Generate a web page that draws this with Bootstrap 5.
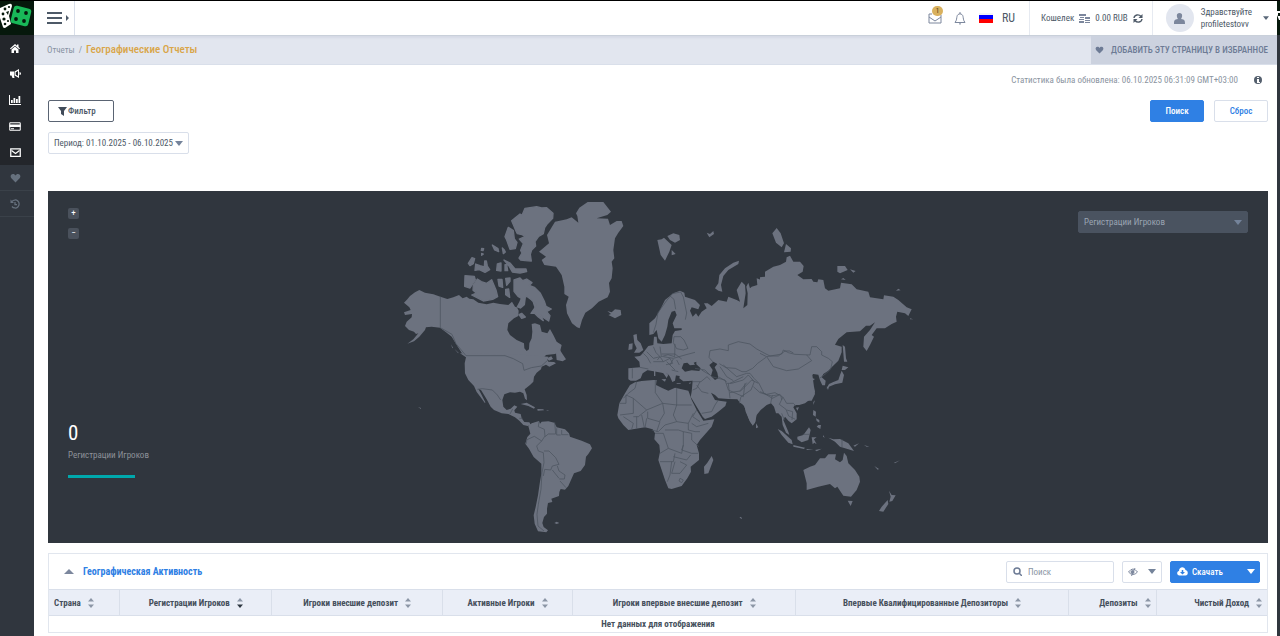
<!DOCTYPE html>
<html lang="ru">
<head>
<meta charset="utf-8">
<meta name="viewport" content="width=device-width, initial-scale=1">
<title>Географические Отчеты</title>
<link href="https://cdn.jsdelivr.net/npm/bootstrap@5.3.0/dist/css/bootstrap.min.css" rel="stylesheet">
<style>
:root{--dark:#30363e;--darker:#23262b;--blue:#2f80e4;--slate:#5a6879;--line:#d9dfea}
body{font-family:"Liberation Sans Narrow","Roboto Condensed","Liberation Sans",sans-serif;font-size:9px;line-height:12px;color:#4d5967;border-top:1px solid #000;background:#fff}
button,input,select{font-family:inherit}
a{text-decoration:none;color:inherit}
svg{display:block;flex:none}
.side{width:34px;background:var(--dark)}
.logo{height:34px;background:#06180c}
.side-link{height:26px;color:#fff}
.side-main{background:var(--darker)}
.side-extra .side-link{color:#66717e;border-bottom:1px solid #3a4149}
.edge{width:3px;background:var(--dark)}
.topbar{height:34px}
.toggle-box{width:41px;padding-left:13px;border-right:1px solid var(--line)}
.plain-btn{border:0;background:none;padding:0;color:inherit}
.tools{gap:12px}
.tools-end{padding:0 14px 0 13px}
.mail-count{left:4px;top:-6px;width:11px;height:10px;border-radius:5px;background:#d9b15e;color:#4a3a1a;font-size:7px;line-height:10px}
.lang{font-size:12px;gap:9px}
.sep{border-left:1px solid #e6eaf1}
.wallet{padding:0 9px 0 11px;gap:5px}
.profile{padding-left:13px;padding-right:8px;gap:7px}
.avatar{width:28px;height:28px;background:#e2e6ef;color:#7c879d}
.crumbs{height:30px;background:#e2e6ef;border-top:1px solid #c9d0da;border-bottom:1px solid var(--line);box-shadow:inset 0 2px 2px #d5dae5;color:#8993a3}
.crumbs nav{padding-left:13px}
.crumbs h1{font-size:11px;line-height:14px;color:#d9a548;font-weight:500}
.fav{background:#ccd2df;color:#6d7b95;width:186px;font-weight:500;padding-right:9px;gap:7px}
.main-area{padding:0 9px 0 14px}
.note{height:30px;color:#8a93a0;padding-right:6px}
.act-row{padding-top:5px;gap:10px}
.ctl{height:22px;border-radius:2px;font-size:9px;line-height:12px;padding:0;border:1px solid var(--line);background:#fff;color:#4d5967}
.filter-btn{width:66px;border-color:#5a6473;padding-left:9px;gap:1px;font-weight:500}
.act-btn{width:54px;font-weight:500;color:var(--blue)}
.act-blue{background:var(--blue);border-color:var(--blue);color:#fff}
.pick{appearance:none;padding:0 5px;background:#fff url("data:image/svg+xml,%3Csvg xmlns='http://www.w3.org/2000/svg' viewBox='0 0 8 5'%3E%3Cpath d='M0 0h8L4 5z' fill='%2374839a'/%3E%3C/svg%3E") no-repeat right 5px center/8px 5px}
.pick-period{width:141px;margin-top:10px}
.map-panel{background:var(--dark);height:352px;margin-top:37px}
.map-panel>svg{width:100%;height:351px}
.zoom-btn{width:11px;height:11px;border:0;border-radius:2px;background:#4a515c;color:#fff;font-size:9px;line-height:9px;padding:0}
.map-tools{left:20px;top:17px;gap:9px}
.map-select{right:20px;top:20px;width:170px;border-color:#4a5360;color:#9aa5b3;background-color:#4a5360}
.map-stat{left:20px;bottom:65px;color:#8d9299}
.map-stat strong{font-size:21px;line-height:24px;color:#fff;font-weight:400}
.stat-bar{height:3px;width:67px;background:#00a8ac;margin-top:14px}
.panel{border:1px solid #e1e6ee;margin-top:10px}
.panel-top{height:35px;padding-right:7px;padding-left:15px}
.panel-tools{gap:8px}
.panel-top h2{font-size:10px;line-height:14px;color:var(--blue);font-weight:700;margin-left:9px}
.search{width:108px;padding:0 6px;gap:6px}
.search input{border:0;outline:0;width:70px;padding:0;color:#8a94a4;background:none}
.search input::placeholder{color:#8a94a4;opacity:1}
.cols-btn{width:40px;padding:0 5px}
.load-btn{width:90px;padding:0 4px 0 6px;gap:4px;font-weight:500}
.geo{table-layout:fixed;line-height:12px;color:#454f5b;width:100%}
.geo th{background:#eaeef7;border:solid var(--line);border-width:1px 1px 1px 0;height:26px;text-align:right;padding:0 5px;white-space:nowrap;font-weight:700}
.geo th.mid{text-align:center}
.geo td{height:16px;padding:0;text-align:center;font-weight:700}
.geo th svg{display:inline-block;margin-left:7px;vertical-align:middle}
</style>
</head>
<body class="d-flex min-vh-100">
<svg width="0" height="0" class="position-absolute" aria-hidden="true">
<symbol id="sort" viewBox="0 0 6 10"><path d="M0 3.500 3 0l3 3.500z"/><path d="M0 6.500h6L3 10z"/></symbol>
<symbol id="sortd" viewBox="0 0 6 10"><path d="M0 3.500 3 0l3 3.500z"/><path d="M0 6.500h6L3 10z" fill="#2d3640"/></symbol>
<symbol id="heart" viewBox="0 0 16 16"><path d="M8 15 1.400 8.300C-1 5.600.3 1.500 4 1.500c2 0 3.200 1.100 4 2.300.8-1.200 2-2.300 4-2.300 3.700 0 5 4.100 2.600 6.800z"/></symbol>
<symbol id="down" viewBox="0 0 8 5"><path d="M0 0h8L4 5z"/></symbol>
</svg>
<nav class="side flex-shrink-0" aria-label="Меню">
<a href="#" class="logo d-block" aria-label="Главная"><svg width="34" height="34" viewBox="0 0 34 34"><path d="M0 7 9 3q3-1 3 2L9 15l2 8-6 4q-2 0-2-1L0 17z" fill="#fff"/><g fill="#06180c"><circle cx="5" cy="8" r="1.400"/><circle cx="9" cy="6" r="1.100"/><circle cx="3" cy="13" r="1.400"/><circle cx="4" cy="18" r="1.600"/><circle cx="5" cy="23" r="1.300"/><circle cx="8" cy="20" r="1.100"/><path d="M6 11l3-1-1 4z"/></g><rect x="12" y="6" width="18" height="18" rx="3" fill="#18b858" transform="rotate(14 21 15)"/><g fill="#06180c"><circle cx="18" cy="10" r="1.900"/><circle cx="26" cy="12" r="1.900"/><circle cx="16" cy="18" r="1.900"/><circle cx="24" cy="20" r="1.900"/></g></svg></a>
<div class="side-main">
<a href="#" class="side-link d-flex align-items-center justify-content-center pe-1" aria-label="Домой"><svg width="10" height="9" viewBox="0 0 20 18" fill="currentColor"><path d="m10 0 4 3.500V1h3v5l3 3-1.500 1.500L10 3.500 1.500 10.500 0 9z"/><path d="m10 5 7 6v7h-5v-5H8v5H3v-7z"/></svg></a>
<a href="#" class="side-link d-flex align-items-center justify-content-center pe-1" aria-label="Маркетинг"><svg width="11" height="10" viewBox="0 0 22 20" fill="currentColor"><path d="M0 5h8v8H8l1 5H5L3 13H0zM9 5l9-5v18l-9-5zm2.500 1.700v4.600L16 14V4zM19 6q3 0 3 3t-3 3z" fill-rule="evenodd"/></svg></a>
<a href="#" class="side-link d-flex align-items-center justify-content-center pe-1" aria-label="Отчеты"><svg width="12" height="10" viewBox="0 0 24 20" fill="currentColor"><path d="M0 0h2v18h22v2H0z"/><path d="M4 10h3.500v6H4zM9 6h3.500v10H9zM14 8h3.500v8H14zM19 2h3.500v14H19z"/></svg></a>
<a href="#" class="side-link d-flex align-items-center justify-content-center pe-1" aria-label="Платежи"><svg width="12" height="9" viewBox="0 0 24 18"><path d="M1.500 1.500h21v15h-21z" fill="none" stroke="currentColor" stroke-width="2"/><path d="M1 5h22v5H1zM4 12.500h6v2H4z" fill="currentColor"/></svg></a>
<a href="#" class="side-link d-flex align-items-center justify-content-center pe-1" aria-label="Сообщения"><svg width="11" height="9" viewBox="0 0 22 18" fill="none" stroke="currentColor" stroke-width="2.500"><path d="M1.500 1.500h19v15h-19z"/><path d="m3 5 8 6 8-6"/></svg></a>
</div>
<div class="side-extra">
<a href="#" class="side-link d-flex align-items-center justify-content-center pe-1" aria-label="Избранное"><svg width="11" height="10" fill="currentColor"><use href="#heart"/></svg></a>
<a href="#" class="side-link d-flex align-items-center justify-content-center pe-1" aria-label="История"><svg width="10" height="10" viewBox="0 0 20 20" fill="none" stroke="currentColor" stroke-width="2.500"><path d="M4 5a8 8 0 1 1 0 10"/><path d="M10 6v5h4"/><path d="M1 1v7h7z" fill="currentColor" stroke="none"/></svg></a>
</div>
</nav>
<div class="flex-grow-1 d-flex flex-column">
<header class="topbar d-flex">
<div class="toggle-box d-flex align-items-center"><button class="plain-btn" aria-label="Развернуть меню"><svg width="22" height="12" viewBox="0 0 22 12" fill="#4d5967"><path d="M0 0h15v2H0zM0 5h15v2H0zM0 10h15v2H0zM19 3l3 3-3 3z"/></svg></button></div>
<div class="ms-auto d-flex align-items-center">
<div class="tools d-flex align-items-center">
<a href="#" class="position-relative" aria-label="Почта"><svg width="14" height="12" viewBox="0 0 14 12" fill="none" stroke="#7c879d"><path d="M4 2H1v9h12V3M1 5l6 4 6-4"/></svg><span class="mail-count position-absolute text-center">1</span></a>
<a href="#" aria-label="Уведомления"><svg width="12" height="13" viewBox="0 0 12 13" fill="none" stroke="#7c879d"><path d="M1 10.500C3 8 2.500 6 3 4.500 3.500 1 8.500 1 9 4.500 9.500 6 9 8 11 10.500zM5 11.500q1 1.500 2 0M6 0v2"/></svg></a>
</div>
<div class="tools-end">
<button class="plain-btn lang d-flex align-items-center"><svg width="14" height="10" viewBox="0 0 14 10"><path fill="#f4f4f6" d="M0 0h14v2H0z"/><path fill="#00f" d="M0 2h14v4H0z"/><path fill="#f00" d="M0 6h14v4H0z"/></svg>RU</button></div>
<div class="sep wallet h-100 d-flex align-items-center"><span>Кошелек</span><svg width="11" height="9" viewBox="0 0 11 9" fill="#7c879d"><path d="M0 0h7v2H0zM1 3h4v1H1zM0 5h5v1H0zM0 7h5v2H0zM6 3h5v2H6zM6 6h5v1H6zM6 8h5v1H6z"/></svg><span>0.00 RUB</span><button class="plain-btn" aria-label="Обновить"><svg width="10" height="9" viewBox="0 0 20 18" fill="none" stroke="#4d5967" stroke-width="2.800"><path d="M2 8C3 1 12 0 16 5M18 10C17 17 8 18 4 13"/><path d="M19 0v8h-8zM1 18v-8h8z" fill="#4d5967" stroke="none"/></svg></button></div>
<div class="sep profile h-100 d-flex align-items-center"><span class="avatar rounded-circle d-flex align-items-center justify-content-center"><svg width="11" height="11" viewBox="0 0 11 11" fill="currentColor"><path d="M5.500 0C9 0 8.500 4 7 6c4 .5 4 2 4 5H0C0 8 0 6.500 4 6 2.500 4 2 0 5.500 0z"/></svg></span><span>Здравствуйте<br>profiletestovv</span><svg class="ms-1" width="6" height="4" fill="#5a6879"><use href="#down"/></svg></div>
</div>
</header>
<div class="crumbs d-flex align-items-stretch flex-shrink-0">
<nav class="d-flex align-items-center gap-1" aria-label="Навигация"><a href="#">Отчеты</a><span>/</span><h1 class="m-0">Географические Отчеты</h1></nav>
<a href="#" class="fav ms-auto d-flex align-items-center justify-content-end text-nowrap"><svg width="9" height="8" fill="currentColor"><use href="#heart"/></svg>ДОБАВИТЬ ЭТУ СТРАНИЦУ В ИЗБРАННОЕ</a>
</div>
<main class="main-area">
<div class="note d-flex align-items-center justify-content-end gap-3"><span>Статистика была обновлена: 06.10.2025 06:31:09 GMT+03:00</span><svg width="8" height="8" viewBox="0 0 8 8"><circle cx="4" cy="4" r="4" fill="#55606e"/><path d="M3 3h2v3h1v1H3V6h0V4H3zM3 1h2v1H3z" fill="#fff"/></svg></div>
<div class="act-row d-flex">
<button class="ctl filter-btn d-flex align-items-center me-auto"><svg width="9" height="9" viewBox="0 0 9 9" fill="#404b59"><path d="M0 0h9L6 4v5L3 7V4z"/></svg>Фильтр</button>
<button class="ctl act-btn act-blue">Поиск</button><button class="ctl act-btn">Сброс</button>
</div>
<select class="ctl pick pick-period d-block" aria-label="Период"><option>Период: 01.10.2025 - 06.10.2025</option></select>
<section class="map-panel position-relative" aria-label="Карта">
<svg viewBox="48 191 1220 351" role="img" aria-label="Карта мира">
<g fill="#6c727f">
<g transform="translate(390 190) scale(.33333)">
<path d="M151 320 130 313 105 308 88 300 75 307 60 318 52 328 42 338 58 352 62 360 42 367 45 375 66 372 65 382 50 395 45 408 57 420 72 425 78 432 85 430 70 448 52 461 72 454 88 440 105 420 108 412 125 410 150 413 170 428 185 440 200 465 215 488 228 500 235 560 400 560 440 540 455 530 452 512 468 495 495 492 510 485 515 465 500 455 490 435 480 417 472 430 455 425 450 405 435 400 425 402 427 425 425 445 418 460 417 478 410 483 403 475 402 460 380 450 360 435 352 420 355 400 372 385 385 378 386 362 380 350 388 335 395 318 408 322 405 345 392 356 375 350 366 335 355 345 330 342 310 338 290 343 265 338 250 328 238 326 230 320 218 325 207 315 190 322 172 327z"/>
<g stroke="#6c727f" stroke-width="4" stroke-linejoin="round">
<path d="m365 92 10-8 15-12 6 4 9-21 15-2 20-3 15 4 15-1 19 17-1 15-16 16-8 12-4 18-14 8-11 16 2 13-12 12-4 13 3 20-18-1-14-2-5-6 9-15-4-8 8-20-12-14 18-8-10-5-14-3-5-10zM355 112l15 10 3 25 8 10-5 19-16 2-10-28-5-10zM307 165l17 11 2 9-12-5zM337 174l6 6 3 6-6 5zM275 175l6 1-2 6-5-1zM275 190l5 2-5 4zM235 220l11-17 8 3-4 15-10 6zM257 222l13 5 13 4 1-18 5 0 3 15 7 11-14 8-17-8-13 2zM322 222l11-3v24l-13-2zM345 224h5l3 18h-8zM342 210l18 9 15 18 33 0 2 8-20 4-23-3-10-18zM225 257l28 2 3 11-16 24-16-5z"/>
<path d="m250 285 12-18 12 8 16 5 15-11 13 31 5 20-15 8-28 5-35-18 14-6-10-8zM324 268h12l2 24-11-4zM347 265l13-1v10l-10 12zM347 298l9-1 3 25-12-8z"/>
<path d="m372 270 18-6 8 8 12-5 16 11-8 8 15 6 18 18 12 24 5 15 16 8-14 8 10 12-4 16-14-9-12-10 10 18-15-11-12-12-10 1 10-14 6-12-15-15-14-10-14 7-12-7-12-15zM387 374l8-4 11 11-11 4zM430 337l7 6-3 6z"/>
</g>
<path d="m498 490 10-14 8 14 12 18-10 6-18-4zM470 505l14-6 5 8-12 5zM183 463l6 10-2 2zM193 476l14 14-4-2z"/>
</g>
<g transform="translate(520 190) scale(.33333)">
<path d="m168 70 10-17 25-17h47l23 29-11 10-32 10 34 1 6 19 20-12h15l5 15-15 20-10 17-5 35 3 25-8 10 3 20-3 30-8 14 3 26-7 17-27 13-20 20-20 13-10 22-7 25-8-3-15-12-15-30-3-25 8-25-13-8v-22l-8-35-17-25-35-5-8-15 13-10-21-15 30-25-6-25 24-40 35-7 15-6 20 16-3-20zM262 363l13 4 10-9 17 2 2 15-19 10-20-10 8-3zM412 150l13-2 7-5 23 22-7 20-13 27-13-17zM442 138l18-8 18 5 2 15-15 8-15-8zM455 180l12 12-12 4zM340 435l10-3 2 18 10 10 8 20-12 8h-16l8-13-7-15zM327 462l11-2-1 18-12 2z"/>
</g>
<g transform="translate(640 220) scale(.33333)">
<path d="M28 345V310L45 295 60 270 75 240 100 220 120 212 133 218 135 230 165 240 180 255 175 268 155 262 150 272 158 290 168 280 175 290 185 275 200 265 192 250 203 250 215 258 235 240 260 245 265 230 290 240 300 245 290 210 305 185 315 195 317 220 310 265 322 255 323 220 319 200 325 188 330 205 335 200 352 195 350 175 370 182 380 160 410 140 440 130 450 108V470H130L20 450 0 440V410L25 378 40 375 42 350 50 350 52 370 70 372 95 370 98 345 105 333 125 330V325L103 325 98 310 110 285 105 272 95 275 85 300 82 320 75 345 65 365 55 355 50 330 40 342z"/>
<path d="m225 205 10-15 3-25 17-20 25-17 17-6-2 10-30 18-15 18-7 27 4 20-12-3zM200 38l10 4 10-9 2 9-14 10z"/>
</g>
<g transform="translate(760 220) scale(.33333)">
<path d="m37 40 13-16 12 16 10 30-7 12-17-14zM72 97l6-25 15 13-1 10zM0 172l15-2v-15l25-15 20-5 18-10 2-13 10-5 10 18h20l11 13-3 17-16 10 18 13 25-1 5 8 12 2 3-9 15 2 5 25 10 7 35-7 3-17 32 5 15 15 35 7 5 17 40 6 2-12 28 4 15 10 25 22 15 6-10 20-10-8-23-5-4 15 2 15-15 7-20 13h-25l-15 20 7 5-12 25-10 18-10-13 2-30 18-20 15-23-15 10-12 0-18 17-40 3-25 20-10 17 20 6v17l-10 25-20 20-10 10-15 10-5 10 12 10-2 14h-8l-7-15-5-17-15-2-12 10 17 5-13 10 10 20 3 15-10 20H0z"/>
<path d="m248 375 7 5 3 35 4 10h-10l-2-25zM248 437l17 5-10 8-10 0zM245 452l7 13-5 23-22 5-20 8-6 5 8-14 13-6 15-6 5-15zM200 500l7 0-3 10zM232 138h23l8 12-23 10-8-5zM270 148l17 5-7 5zM243 178l7-4 7 6zM408 212l7-6 7 5zM450 295l10 3-10 0z"/>
</g>
<g transform="translate(460 340) scale(.33333)">
<path d="M0 40 18 52 14 70 15 100 25 120 42 138 50 156 62 172 75 190 76 187 65 165 55 146 63 150 80 178 92 200 102 210 125 220 145 222 165 232 178 242 190 255 203 258 213 255 208 247 193 246 185 235 182 222 165 218 163 211 172 200 163 196 152 206 140 210 130 200 127 180 133 163 150 157 165 158 180 155 190 160 195 176 201 181 200 165 194 148 210 135 220 125 222 110 230 98 243 88 245 80 258 74 268 80 288 70 282 66 265 65 262 58 265 50 200 45z"/>
<path d="m182 192 18-4 25 14-3 4-17-8zM232 207l18 1 2 3-19 1zM258 210h7v2zM205 258l10-8 22-7 3 8 5-6 20-1 18 4 7 14 25 6 12 12 3 10 35 12 25 11 6 12-11 17-7 8-3 25-13 18-20 7-9 20-8 18-10 11-13-2-4 9-1 12-23 8 3 10-13 3-3 17v15l-9 10-5 18 4 12 13 10-5 6-25-3-10-23-3-25 6-25 7-35 5-35 5-30v-30l-23-20-14-25-11-15 6-20 9-10zM283 549l7-4 8 4-8 3z"/>
</g>
<g transform="translate(600 350) scale(.33333)">
<path d="M85 55 120 52 118 35 103 20 120 18 135 5 150 0H480V170L470 182 466 215 458 225 450 215 437 185 433 165 420 158 412 148 385 147 355 145 345 135 333 128 345 150 358 152 380 155 376 168 355 185 335 200 315 207 308 200 290 170 272 140 275 125 278 92 250 94 238 85 240 72 228 75 225 92 217 96 210 80 195 60 190 48 178 38 175 44 183 56 205 74 200 84 190 70 172 58 166 46 150 50 143 60 128 70 122 85 108 92 92 92 85 88z"/>
<path d="m268 130 7 20 15 30 20 32 33-4-8 22-35 40-10 15 7 25v20l-25 20 1 15-11 20-17 23-30 9-10-2-10-25-15-45-5-15 5-25-2-20-15-17 2-18-7-12-23-6-50 8-15-15-15-20-3-10 6-35 17-30 15-25 15-8 20-4 35-3h10l-2 15 20 10 17 7 20-9 40 9zM335 318l5 12-15 40-12 2-1-22 10-12zM468 220l7 12-7 3zM184 88l14-1-3 8zM162 60h4v18h-4zM230 100h12v2h-12zM266 99l8-2-4 5z"/>
</g>
<g transform="translate(740 350) scale(.33333)">
<path d="M0 60H215L222 110 225 125 215 145 195 160 178 165 165 165 160 172 170 190 170 208 155 220 145 212 135 200 130 210 145 245 148 255 138 248 128 225 125 200 115 190 108 190 102 170 93 160 80 165 62 180 50 195 45 218 38 227 28 210 17 180 12 168 0 155zM113 237l12 6 30 27 3 13-13-5-20-23zM160 285l35 8-3 4-32-7zM172 260l18-5 17-23 5 8-7 30-20 7-13-9zM215 262h15l-8 6 8 15-7-5-5 5zM220 180l8 5-1 15-8-5zM235 225l8 0-2 12-11-7zM228 205l10 5 0 8-8-5zM265 263l15 5 20-1 25 13 17 23-17-5-25-8-15-15zM340 287l17-7-12 10zM168 173l9-1-5 10zM220 156l5-5-5 14zM200 297l20 2-20 1zM225 300l20-4-15 8zM250 255l4 8-5-3z"/>
<path d="m190 360 20-10 15-5 15-20 15 0 10-12 23 0-3 15 15 9 8-7 4-22 8 10 5 22 20 20 13 20 2 15-10 25-17 20-23-3-18-27-7 5-15-13-35 8-35 10 0-20zM323 452l15 1-6 15zM447 422l8 13 12 1-10 17-9 2 4-15zM443 450l2 12-15 23-13-2 8-13zM403 348l14 9-4 2zM462 338l18-7-15 9zM372 285l16 5-8 0zM0 500l6 4-6 1z"/>
</g>
<path d="M418 407l3 1v1z"/>
</g>
<path fill="#30363e" transform="translate(600 350) scale(.33333)" d="m245 55 6-15 11-2 8 8 15-2-4-6 8-3 0 8 13 12-4 8-23-2-20 4zM328 45l12-10 12 7-8 10 8 16 3 17-10 5-12-12 5-18z"/>
<g fill="none" stroke="#4c535e" stroke-width="2.200" stroke-linejoin="round">
<g transform="translate(390 190) scale(.33333)"><path d="M151 320v93l35 20 12 28 30 36H345l25 9 28 15 4 20 22-8 30-5 20-18"/></g>
<g transform="translate(520 190) scale(.33333)"><path d="m400 428 8-25 6-35 25-35 18-22 25-5 8 15 10 48-4 20M450 318l12 10 5 30M462 440h20l10 10 12 25-14 5-20-4-10-18zM400 470l8 18 12 12-8 10M420 470l4 30 20-6 20 6 1-38M370 490l12 12 10 18M430 500l30 5 35-10 30-8M400 515l30 0 20-10 8 15-20 4M470 510l8 15"/></g>
<g transform="translate(640 220) scale(.33333)"><path d="m207 412 3-20 30-5 25 5v-17l30-10 35 7 20 15 28 15 12 6 25 0 20-15 14 0 11 6M378 412l-25 18-15 15-20 10-12 0-20-10-28-2-20-12M207 412l12 14M240 440l20 30 20 12M250 435l40 35 30-10 10 0 12 15 15 15 15 30 25 15 20-10M165 445l30 5 20 20 40 10 10 30 45 20 5-40M270 490l40-20"/></g>
<g transform="translate(760 220) scale(.33333)"><path d="m0 400 20 10 45-8 5-12 15 8 20 5 45 2 5-25 15 0 15 15 0 10 20 10 12 10-5 22-12 12-20 15M20 410l20 30 40 12 35-5 40-25-15-17M0 515l20 8 25-5 18 10 2 12"/></g>
<g transform="translate(460 340) scale(.33333)"><path d="m52 148 15-2 30 4 15 15 10 15M150 222l8-15M178 235l10 0M237 245l-2 15 18 8 2 20M255 290l10-8 22 0-3-35M290 265l0 20 12 0M305 270v14l20 0M255 288l-10 15-22-14-22 10-3 14M245 303l-15 15 5 15 15 5 2 30-6 30-3 50-8 45-4 30 3 35 18 15M252 333l15 0 20 20 10 20-20 5-5 12-18-2-4 20M292 378l5 15 18 12-2 12-15 0M277 390l20 25M300 423l18 20"/></g>
<g transform="translate(600 350) scale(.33333)"><path d="m97 55 0 30M120 52l25 5M110 95l-5 20-20 15-15 15M58 160h20v-25M100 145v45M78 135l22 10 40 35-25 20-15 0M100 190l-40 5M140 180l48-20-22-32 0-38M188 160l42 5 0-52M230 165h45M188 160l5 30-15 25-35-10 0-20M230 165l-10 30 10 20-35 10-20 20-20-5M230 215l35 5 15-30M265 220l0 20 20 5 15 0M275 220l15 10 35-10M290 180l-12 20 22 15M165 250h25l15 45-25 15M195 240l40 0 15 5 0 40-5 25-40-15M250 245l25 5 0 20 22 20M250 285l-5 15 30 10 20 0M180 335h40l5-25M215 335l-5 40-8 20M220 320l40 10 12-15M225 335l-10 35 25 0 20-25-20-10M240 385l10 5-5 8-8-5zM110 200l0 35M125 195l8 38M140 205l-5 28M70 200l15 10 15 10-5 18M180 215l-10 30M278 95l25 0 18-15 10 10M290 105l15 20 20 5M278 120l12-5 10-20M305 190l30-5 10-20 10-15M380 100l15 0 35-10 15-15 18 20-10 25-30 20-5 20M385 100l5 45M390 128l30-5 20-25M355 80l25 15M305 60l25 15M140 5l20 20 20-5 10 15M185 12l40 0 20 15M200 35l25 25M215 60l20 5M210 45l10-18"/></g>
<g transform="translate(740 350) scale(.33333)"><path d="m40 110 20 18 35 10 25-5 8 10-10 20 20 15 8 20 20 10M128 140l12 20 20 0 8 8M92 160l5-25M140 180l18 5-2 25M0 125l20-20 15-15 20 10M125 190l8 20M306 268v24M188 253l20 0"/></g>
</g>
<path fill="#6c727f" d="M739 517l3 1v1z"/>
</svg>
<div class="map-tools position-absolute d-flex flex-column"><button class="zoom-btn" aria-label="Приблизить">+</button><button class="zoom-btn" aria-label="Отдалить">−</button></div>
<select class="ctl pick map-select position-absolute" aria-label="Показатель"><option>Регистрации Игроков</option></select>
<div class="map-stat position-absolute"><strong class="d-block mb-1">0</strong><div>Регистрации Игроков</div><div class="stat-bar"></div></div>
</section>
<section class="panel">
<div class="panel-top d-flex align-items-center">
<button class="plain-btn" aria-label="Свернуть"><svg width="10" height="5" viewBox="0 0 10 5" fill="#7c879d"><path d="M0 5 5 0l5 5z"/></svg></button><h2 class="mb-0 me-auto">Географическая Активность</h2>
<div class="panel-tools d-flex">
<label class="ctl search d-flex align-items-center"><svg width="9" height="9" viewBox="0 0 9 9" fill="none" stroke="#6d7b95" stroke-width="1.500"><circle cx="4" cy="4" r="3"/><path d="m6 6 3 3"/></svg><input type="search" placeholder="Поиск" aria-label="Поиск"></label>
<button class="ctl cols-btn d-flex align-items-center justify-content-between" aria-label="Столбцы"><svg width="10" height="8" viewBox="0 0 20 16" fill="none" stroke="#7c879d" stroke-width="2"><path d="M1 8q9-12 18 0-9 10-18 0zM14 0 7 16"/><circle cx="9" cy="8" r="3" fill="#7c879d"/></svg><svg width="8" height="5" fill="#74839a"><use href="#down"/></svg></button>
<button class="ctl act-blue load-btn d-flex align-items-center"><svg width="11" height="9" viewBox="0 0 22 18"><path d="M5 17C-1 17-1 9 4 8 4-1 15-2 17 6c6 1 6 11 0 11z" fill="#fff"/><path d="M9.500 6h3v4H16l-5 5-5-5h3.500z" fill="#2f80e4"/></svg>Скачать<svg class="ms-auto" width="8" height="5" fill="#fff"><use href="#down"/></svg></button>
</div>
</div>
<table class="geo">
<colgroup><col style="width:5.8%"><col style="width:12.5%"><col style="width:14%"><col style="width:10.7%"><col style="width:18.3%"><col style="width:22.4%"><col style="width:7.2%"><col></colgroup>
<thead><tr><th class="text-start">Страна<svg width="6" height="10" fill="#8c96a6"><use href="#sort"/></svg></th><th class="mid">Регистрации Игроков<svg width="6" height="10" fill="#8c96a6"><use href="#sortd"/></svg></th><th class="mid">Игроки внесшие депозит<svg width="6" height="10" fill="#8c96a6"><use href="#sort"/></svg></th><th class="mid">Активные Игроки<svg width="6" height="10" fill="#8c96a6"><use href="#sort"/></svg></th><th class="mid">Игроки впервые внесшие депозит<svg width="6" height="10" fill="#8c96a6"><use href="#sort"/></svg></th><th class="mid">Впервые Квалифицированные Депозиторы<svg width="6" height="10" fill="#8c96a6"><use href="#sort"/></svg></th><th>Депозиты<svg width="6" height="10" fill="#8c96a6"><use href="#sort"/></svg></th><th class="border-end-0">Чистый Доход<svg width="6" height="10" fill="#8c96a6"><use href="#sort"/></svg></th></tr></thead>
<tbody><tr><td colspan="8">Нет данных для отображения</td></tr></tbody>
</table>
</section>
</main>
</div>
<div class="edge flex-shrink-0"><div class="logo"><svg width="3" height="34" viewBox="0 0 3 34"><path d="M0 10h3v2H1v3h2v4H2L0 14z" fill="#fff"/></svg></div></div>
<script src="https://cdn.jsdelivr.net/npm/bootstrap@5.3.0/dist/js/bootstrap.bundle.min.js"></script>
</body>
</html>
